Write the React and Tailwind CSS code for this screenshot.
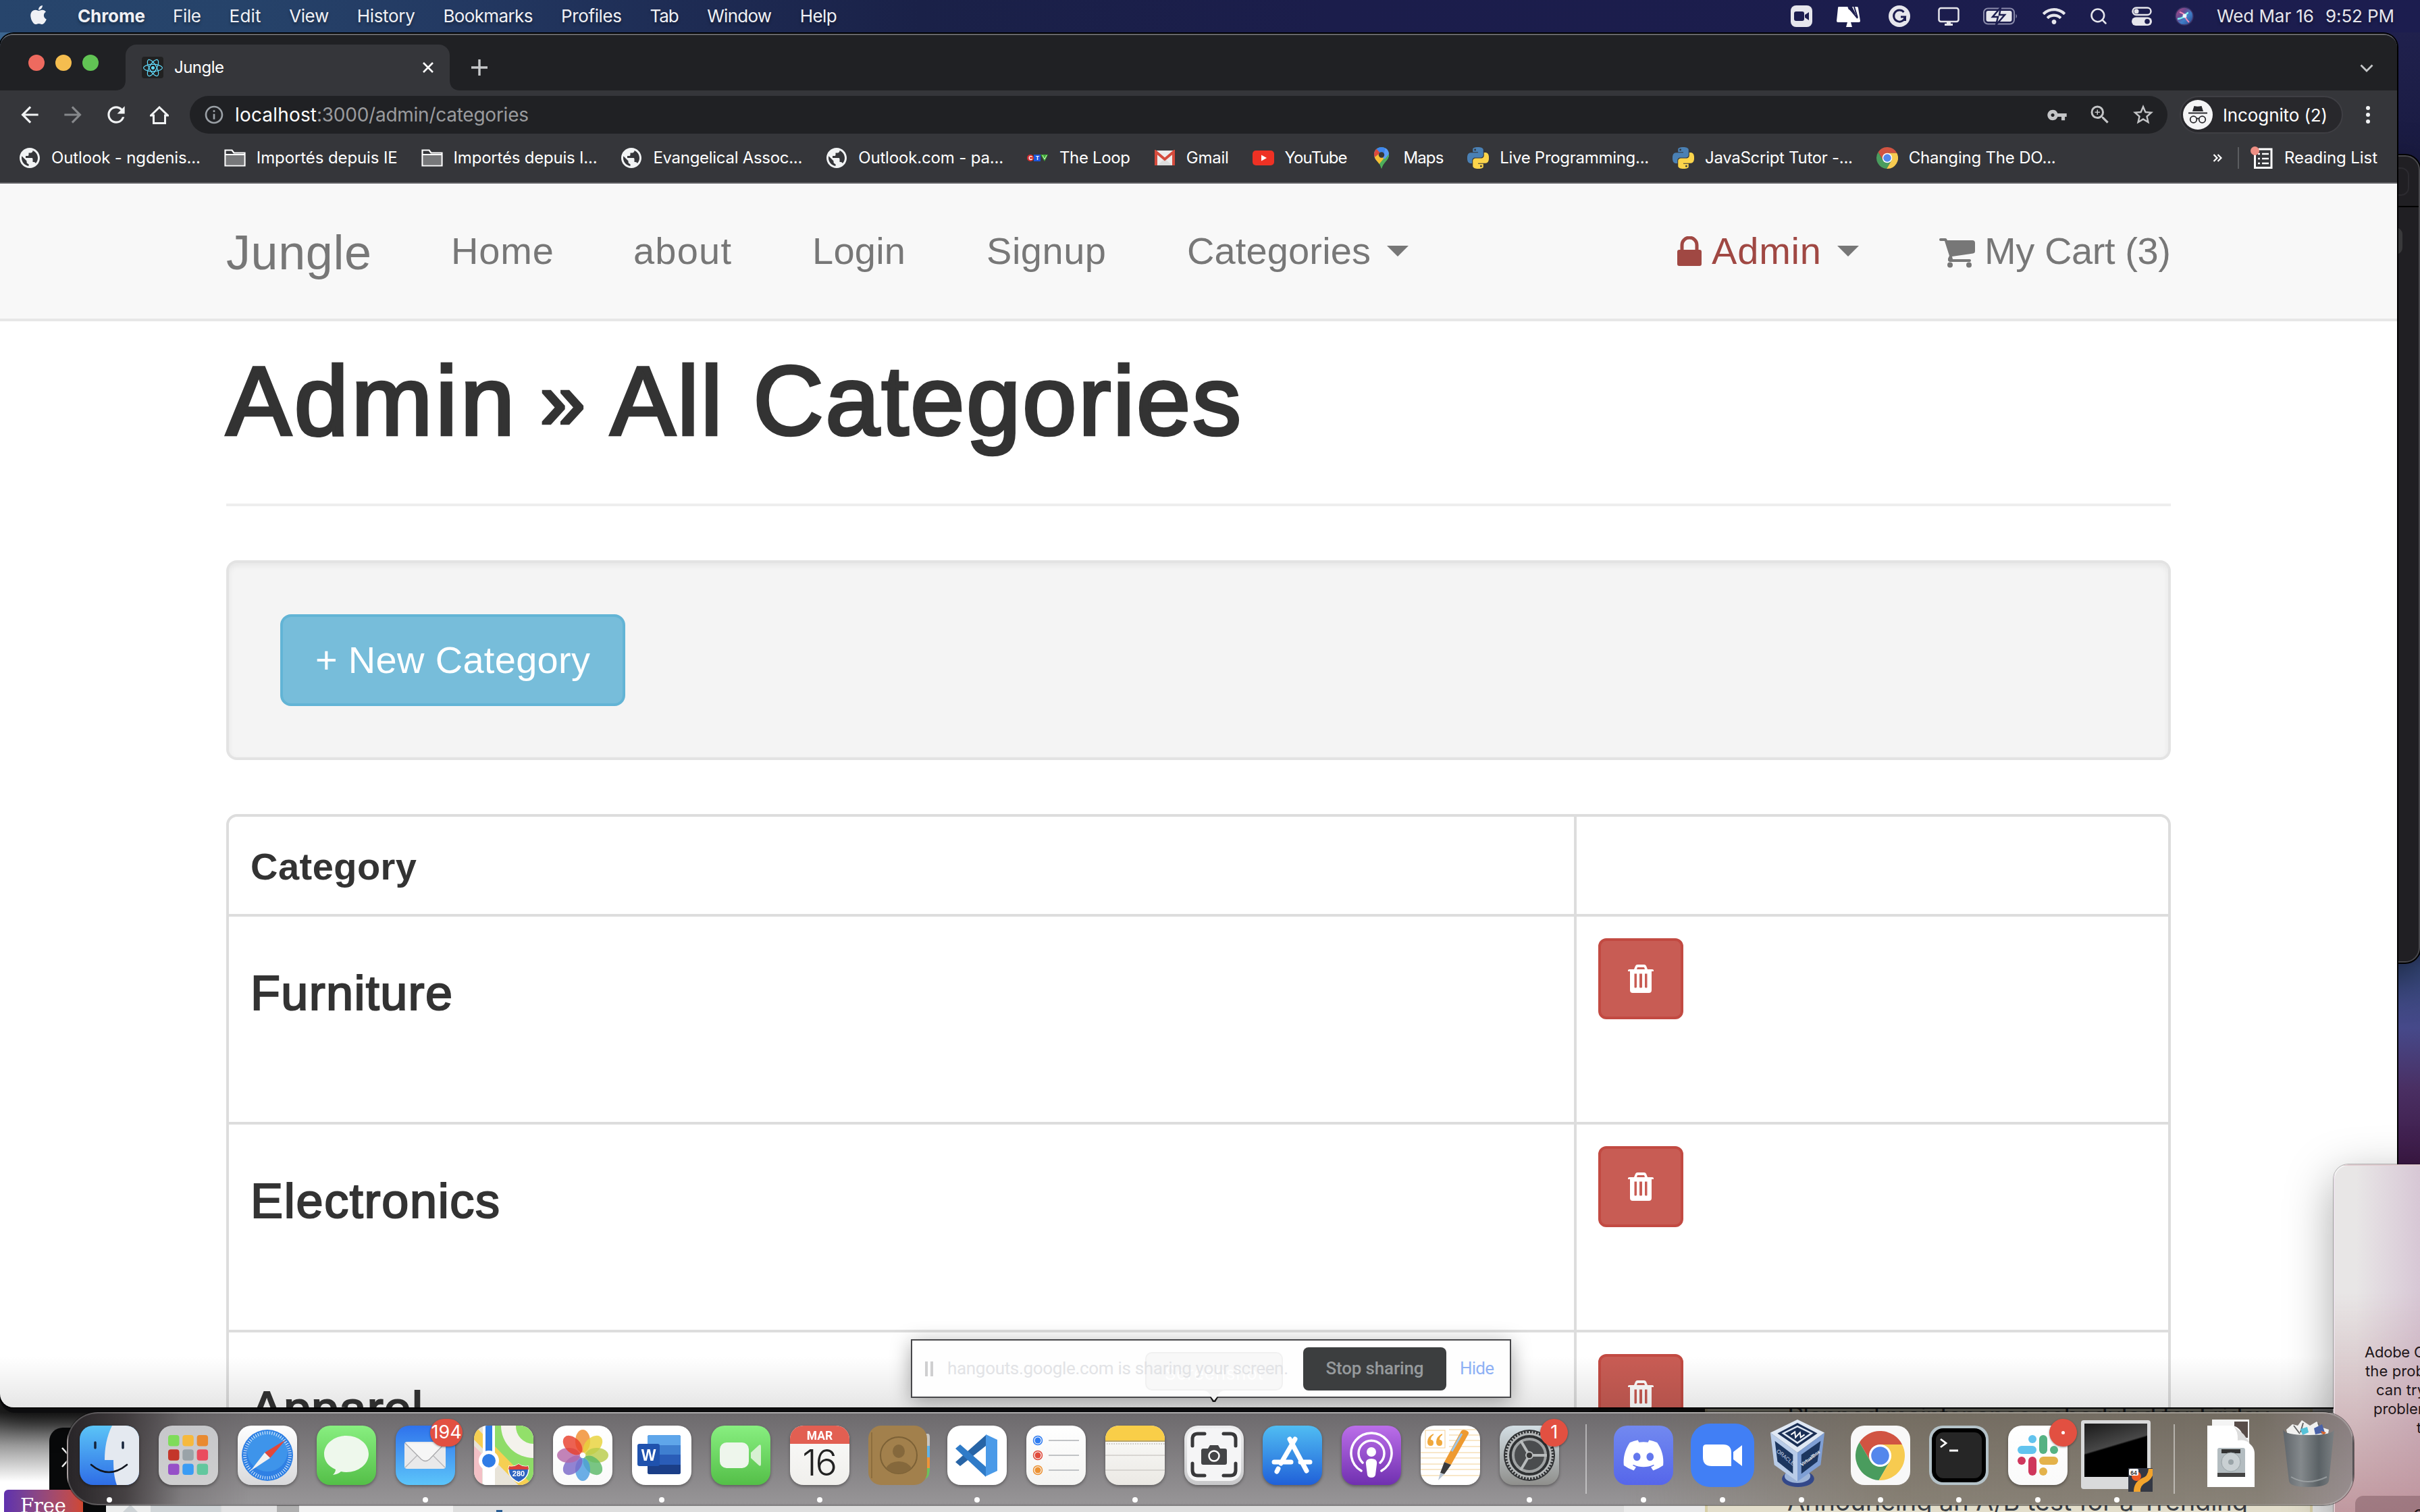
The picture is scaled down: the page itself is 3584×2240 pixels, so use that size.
import React, { useLayoutEffect, useRef, useState } from "react";
import { FaApple, FaReact, FaWifi, FaDiscord } from "react-icons/fa";
import { MdPublic, MdVpnKey, MdZoomIn, MdStarBorder, MdInfoOutline, MdArrowBack, MdArrowForward, MdRefresh } from "react-icons/md";
import { FiSearch } from "react-icons/fi";

/* Text set to a known width: tracking is adjusted after measuring. */
function T({ w, className = "", children }) {
  const ref = useRef(null);
  const [ls, setLs] = useState(0);
  useLayoutEffect(() => {
    const n = ref.current.textContent.length;
    setLs((w - ref.current.getBoundingClientRect().width) / Math.max(1, n - 1));
  }, [w]);
  return (
    <span className={`inline-block shrink-0 whitespace-nowrap ${className}`} style={{ width: w }}>
      <span ref={ref} style={{ letterSpacing: ls }}>{children}</span>
    </span>
  );
}

const menus = [["File", 42], ["Edit", 47], ["View", 59], ["History", 86], ["Bookmarks", 133], ["Profiles", 90], ["Tab", 43], ["Window", 96], ["Help", 55]];

function MenuBar() {
  return (
    <div className="flex h-[48px] w-full items-center bg-[linear-gradient(90deg,#27456c_0%,#26436a_10%,#233962_19%,#1e2c54_28%,#1a2148_38%,#1b1d4b_55%,#1c1d4f_100%)] text-[26px] leading-[48px] text-[#f0f1f5] [text-shadow:0_3px_4px_rgba(0,0,0,0.35)]">
      <FaApple className="ml-[41px] size-[32px] -translate-y-[2px]" />
      <T w={100} className="ml-[42px] font-bold">Chrome</T>
      <div className="ml-[41px] flex gap-[41.600px]">
        {menus.map(([m, w]) => <T key={m} w={w}>{m}</T>)}
      </div>
      <div className="ml-auto flex items-center text-[#e6e6ec]">
        <svg width="32" height="32" viewBox="0 0 32 32"><rect width="32" height="32" rx="8" fill="#e6e6ec" /><rect x="5" y="9" width="15" height="14" rx="3" fill="#1c1d4f" /><path d="M21 14l6-4v12l-6-4z" fill="#1c1d4f" /></svg>
        <svg className="ml-[35px]" width="38" height="34" viewBox="0 0 38 34"><path d="M4 3h16l-2 3 12 9L24 3h7q2 0 2 2l3 19q0 2-2 2H3q-2 0-2-2L3 5q0-2 1-2z" fill="#fff" /><path d="M18 3l14 17M27 3l5 16" stroke="#1c1d4f" strokeWidth="2" /><path d="M17 26h5l2 7h-9z" fill="#fff" /></svg>
        <svg className="ml-[40px]" width="32" height="32" viewBox="0 0 32 32"><circle cx="16" cy="16" r="16" fill="#e6e6ec" /><path d="M22.500 10A8.500 8.500 0 1 0 24.500 17H18M24.500 17v6" fill="none" stroke="#1c1d4f" strokeWidth="3" /></svg>
        <svg className="ml-[41px]" width="32" height="28" viewBox="0 0 32 28"><rect x="1.500" y="2" width="29" height="20" rx="3" fill="none" stroke="#e6e6ec" strokeWidth="2.500" /><path d="M13 22h6v3h3v3H10v-3h3z" fill="#e6e6ec" /></svg>
        <svg className="ml-[35px]" width="52" height="26" viewBox="0 0 52 26"><rect x="1" y="1.500" width="45" height="23" rx="6" fill="none" stroke="#8b8cab" strokeWidth="2" /><rect x="4.500" y="5" width="38" height="16" rx="3" fill="#e6e6ec" /><path d="M48.500 9.500q3 3.500 0 7z" fill="#8b8cab" /><path d="M26 0L14 14h8l-3 12 13-15h-8z" fill="#e6e6ec" stroke="#1c1d4f" strokeWidth="2.500" /></svg>
        <FaWifi className="ml-[36px] size-[34px]" />
        <FiSearch className="ml-[35px] size-[28px]" strokeWidth="2.2" />
        <svg className="ml-[35px]" width="30" height="28" viewBox="0 0 30 28"><rect x="1.500" y="1.500" width="27" height="10.500" rx="5.200" fill="none" stroke="#e6e6ec" strokeWidth="2.500" /><circle cx="7" cy="6.800" r="3.500" fill="#e6e6ec" /><rect y="15.500" width="30" height="12.500" rx="6.200" fill="#e6e6ec" /><circle cx="23" cy="21.800" r="3.800" fill="#1c1d4f" /></svg>
        <svg className="ml-[34px]" width="28" height="28" viewBox="0 0 28 28"><defs><linearGradient id="siri" x1="0" y1="0" x2="1" y2="1"><stop offset="0" stopColor="#c04a86" /><stop offset=".35" stopColor="#6a4a90" /><stop offset=".6" stopColor="#3f7fc8" /><stop offset="1" stopColor="#2a3a80" /></linearGradient></defs><circle cx="14" cy="14" r="13" fill="url(#siri)" stroke="#3c3468" strokeWidth="1.500" /><path d="M7 8q7 2 8 6t6 9" stroke="#f58ab4" strokeWidth="2" fill="none" /><path d="M4 18q8-1 11-5t5-4" stroke="#7ef0f0" strokeWidth="2.500" fill="none" /><circle cx="14.500" cy="13.500" r="3" fill="#fff" opacity=".85" /></svg>
        <T w={144} className="ml-[34px]">Wed Mar 16</T>
        <T w={102} className="mr-[38px] ml-[17px]">9:52 PM</T>
      </div>
    </div>
  );
}

const Globe = () => <MdPublic className="size-[36px] -mx-[2px] shrink-0 text-[#f1f3f4]" />;
const Folder = () => (
  <svg width="32" height="26" viewBox="0 0 32 26"><path d="M1.500 24.500V1.500h10l3 4h16v19z" fill="none" stroke="#fff" strokeWidth="2.200" /><rect x="3" y="8.500" width="26" height="14.500" fill="#77787a" /><path d="M2 8h28" stroke="#fff" strokeWidth="2" /></svg>
);
const PY = "M14.25.18l.9.2.73.26.59.3.45.32.34.34.25.34.16.33.1.3.04.26.02.2-.01.13V8.5l-.05.63-.13.55-.21.46-.26.38-.3.31-.33.25-.35.19-.35.14-.33.1-.3.07-.26.04-.21.02H8.77l-.69.05-.59.14-.5.22-.41.27-.33.32-.27.35-.2.36-.15.37-.1.35-.07.32-.04.27-.02.21v3.06H3.17l-.21-.03-.28-.07-.32-.12-.35-.18-.36-.26-.36-.36-.35-.46-.32-.59-.28-.73-.21-.88-.14-1.05-.05-1.23.06-1.22.16-1.04.24-.87.32-.71.36-.57.4-.44.42-.33.42-.24.4-.16.36-.1.32-.05.24-.01h.16l.06.01h8.16v-.83H6.18l-.01-2.75-.02-.37.05-.34.11-.31.17-.28.25-.26.31-.23.38-.2.44-.18.51-.15.58-.12.64-.1.71-.06.77-.04.84-.02 1.27.05zm-6.3 1.98l-.23.33-.08.41.08.41.23.34.33.22.41.09.41-.09.33-.22.23-.34.08-.41-.08-.41-.23-.33-.33-.22-.41-.09-.41.09z";
const Python = () => (
  <svg width="32" height="32" viewBox="0 0 24 24"><path d={PY} fill="#4a80b4" /><path d={PY} transform="rotate(180 12 12)" fill="#fbd44b" /></svg>
);
const Ctv = () => (
  <span className="flex w-[32px] justify-center text-[8px] leading-[10px] font-bold text-white">
    <span className="size-[10px] rounded-full bg-[#d8322c] text-center">C</span>
    <span className="size-[10px] bg-[#1d55d8] text-center">T</span>
    <svg width="11" height="10" viewBox="0 0 11 10"><path d="M0 0h11L6 10z" fill="#3fae35" /><path d="M3 1l3 6 3-6" stroke="#d8f5d0" fill="none" /></svg>
  </span>
);
const Gmail = () => (
  <svg width="32" height="24" viewBox="0 0 32 24"><rect x="1" y="1" width="30" height="22" rx="2" fill="#ececec" /><path d="M5 23L16 13l11 10z" fill="#dcdcdc" /><path d="M3 23V3l13 11L29 3v20" fill="none" stroke="#d54b3d" strokeWidth="4" /></svg>
);
const YouTube = () => (
  <svg width="32" height="24" viewBox="0 0 32 24"><rect y="1" width="32" height="22" rx="5" fill="#ee3124" /><path d="M13 7.500l8 4.500-8 4.500z" fill="#fff" /></svg>
);
const MapsPin = () => (
  <svg width="32" height="32" viewBox="0 0 32 32"><defs><clipPath id="pin"><path d="M16 0C9 0 5 5 5 11c0 4 2 7 5 10.500S15 28 16 32c1-4 3-7 6-10.500S27 15 27 11C27 5 23 0 16 0z" /></clipPath></defs><g clipPath="url(#pin)"><rect width="32" height="32" fill="#4fae5a" /><path d="M0 0h32v6L16 11 6 24 0 20z" fill="#3f86ee" /><path d="M0 3h9l7 8L6 24 0 20z" fill="#dc4a3c" /><path d="M3 17l13-10 5 8-11 13z" fill="#f6bf35" /><path d="M22 0l10 10-8 9-6-3z" fill="#5a9af5" /><path d="M27 10L10 32h22z" fill="#4fae5a" /></g><circle cx="16" cy="11.500" r="4.200" fill="#35363a" /></svg>
);
const ChromeMark = ({ className }) => (
  <svg className={className} viewBox="2 2 44 44"><path d="M43.600 14H24L15.340 29 5.540 12.030A22 22 0 0 1 43.600 14z" fill="#d15442" /><path d="M5.540 12.030L15.340 29h17.320L22.860 45.970A22 22 0 0 1 5.540 12.030z" fill="#4a9c5e" /><path d="M43.600 14H24l8.660 15-9.800 16.970A22 22 0 0 0 43.600 14z" fill="#f7cb50" /><circle cx="24" cy="24" r="10" fill="#fff" /><circle cx="24" cy="24" r="8" fill="#5487ec" /></svg>
);

const bookmarks = [
  [Globe, "Outlook - ngdenis...", 221], [Folder, "Importés depuis IE", 209], [Folder, "Importés depuis I...", 213],
  [Globe, "Evangelical Assoc...", 221], [Globe, "Outlook.com - pa...", 215], [Ctv, "The Loop", 105], [Gmail, "Gmail", 63],
  [YouTube, "YouTube", 93], [MapsPin, "Maps", 60], [Python, "Live Programming...", 221], [Python, "JavaScript Tutor -...", 219],
  [() => <ChromeMark className="size-[32px]" />, "Changing The DO...", 218],
];

function BrowserChrome() {
  return (
    <div className="w-full bg-[#35363a] text-[24px] text-white">
      <div className="flex h-[82px] items-end bg-[#202124]">
        <div className="flex h-full items-center gap-[16px] self-start pl-[42px]">
          <span className="size-[24px] rounded-full bg-[#ee6a5f]" />
          <span className="size-[24px] rounded-full bg-[#f5bd4f]" />
          <span className="size-[24px] rounded-full bg-[#61c454]" />
        </div>
        <svg className="ml-[24px]" width="16" height="16"><path d="M0 16Q16 16 16 0V16z" fill="#35363a" /></svg>
        <div className="flex h-[68px] w-[480px] items-center rounded-t-[16px] bg-[#35363a] pl-[24px]">
          <span className="flex size-[32px] items-center justify-center rounded-[4px] bg-[#212121]"><FaReact className="size-[29px] text-[#61dafb]" /></span>
          <T w={74} className="ml-[16px]">Jungle</T>
          <svg className="mr-[23px] ml-auto" width="18" height="18" viewBox="0 0 18 18"><path d="M2 2l14 14M16 2L2 16" stroke="#fff" strokeWidth="2.600" /></svg>
        </div>
        <svg width="16" height="16"><path d="M16 16Q0 16 0 0V16z" fill="#35363a" /></svg>
        <svg className="mb-[22px] ml-[16px]" width="24" height="24"><path d="M12 0v24M0 12h24" stroke="#c6c8ca" strokeWidth="3.400" /></svg>
        <svg className="mr-[35px] mb-[26px] ml-auto" width="20" height="13"><path d="M1.500 1.500L10 10l8.500-8.500" fill="none" stroke="#c6c8ca" strokeWidth="2.800" /></svg>
      </div>
      <div className="flex h-[72px] items-center">
        <MdArrowBack className="ml-[25px] size-[38px] text-[#f1f3f4]" />
        <MdArrowForward className="ml-[26px] size-[38px] text-[#86888b]" />
        <MdRefresh className="ml-[26px] size-[38px] text-[#f1f3f4]" />
        <svg className="ml-[31px]" width="28" height="27" viewBox="0 0 28 27"><path d="M1.500 14L14 2l12.500 12H22.500v11.500h-17V14z" fill="none" stroke="#f1f3f4" strokeWidth="3" strokeLinejoin="miter" /></svg>
        <div className="ml-[31px] flex h-[56px] w-[2929px] items-center rounded-full bg-[#202124] text-[28px]">
          <MdInfoOutline className="ml-[20px] size-[32px] text-[#9aa0a6]" />
          <T w={121} className="ml-[15px]">localhost</T>
          <T w={314} className="text-[#9a9b9e]">:3000/admin/categories</T>
          <MdVpnKey className="ml-auto size-[31px] text-[#c4c5c7]" />
          <MdZoomIn className="ml-[30px] size-[36px] text-[#c4c5c7]" />
          <MdStarBorder className="mr-[18px] ml-[28px] size-[36px] text-[#c4c5c7]" />
        </div>
        <div className="ml-[18px] flex h-[56px] w-[242px] items-center rounded-full border-2 border-[#3f3f44] bg-[#28282c] pl-[3px]">
          <svg width="44" height="44" viewBox="0 0 44 44"><circle cx="22" cy="22" r="22" fill="#f5f5f6" /><path d="M14 17l2.500-8q5 1.500 11 0l2.500 8zM8 18.500h28v2H8z" fill="#28282c" /><g fill="none" stroke="#28282c" strokeWidth="1.800"><circle cx="15.500" cy="29" r="4.800" /><circle cx="28.500" cy="29" r="4.800" /><path d="M20 28q2-1 4 0" /></g></svg>
          <T w={155} className="ml-[15px] text-[26px]">Incognito (2)</T>
        </div>
        <div className="ml-[34px] flex flex-col gap-[4px]">
          <span className="size-[6px] rounded-full bg-[#f1f3f4]" /><span className="size-[6px] rounded-full bg-[#f1f3f4]" /><span className="size-[6px] rounded-full bg-[#f1f3f4]" />
        </div>
      </div>
      <div className="flex h-[66px] items-center gap-[34.800px] border-b-2 border-[#5f5f63] pb-[8px] pl-[28px]">
        {bookmarks.map(([I, label, w], i) => (
          <div key={i} className="flex items-center"><span className="flex w-[32px] items-center justify-center"><I /></span><T w={w} className="ml-[16px]">{label}</T></div>
        ))}
        <div className="mr-[29px] ml-auto flex items-center">
          <svg width="14" height="12"><path d="M1.500 1l5 5-5 5M7.500 1l5 5-5 5" fill="none" stroke="#fff" strokeWidth="2.200" /></svg>
          <span className="ml-[23px] h-[32px] w-[2px] bg-[#5b5d60]" />
          <svg className="ml-[17px]" width="34" height="34" viewBox="0 0 34 34"><path d="M6.500 7v24.500h24.500V4H12" fill="none" stroke="#fff" strokeWidth="3" /><path d="M11 11h3M17 11h10M11 18h3M17 18h10M11 25h3M17 25h10" stroke="#fff" strokeWidth="2.500" /><circle cx="6.500" cy="6.500" r="6.500" fill="#ee8f84" /></svg>
          <T w={138} className="ml-[16px]">Reading List</T>
        </div>
      </div>
    </div>
  );
}

const Caret = () => <svg className="ml-[24px]" width="32" height="16"><path d="M0 0h32L16 16z" fill="#777" /></svg>;
const Trash = () => (
  <svg width="38" height="42" viewBox="0 0 38 42"><path fillRule="evenodd" fill="#fff" d="M9 7l2-5q1-2 3-2h10q2 0 3 2l2 5h7q2 0 2 1.500V10h-3v28q0 4-4 4H7q-4 0-4-4V10H0V8.500Q0 7 2 7zm4 0h12l-1-3H14zM9.500 13.500v20q0 1 1.500 1t2-1v-20zM17 13.500v20q0 1 2 1t2-1v-20zM25 13.500v20q.5 1 2 1t1.500-1v-20z" /></svg>
);

function Row({ name, w }) {
  return (
    <tr className="h-[308px] align-top">
      <td className="h-[308px] w-[1992px] border-t-4 border-r-4 border-[#ddd] px-[32px] pt-[74px]">
        <T w={w} className="text-[72px] leading-[79px] text-[#333] [-webkit-text-stroke:2.200px_#333]">{name}</T>
      </td>
      <td className="border-t-4 border-[#ddd] px-[32px] pt-[32px]">
        <button className="flex h-[120px] w-[126px] items-center justify-center rounded-[12px] border-4 border-[#c24a42] bg-[#c85c54]"><Trash /></button>
      </td>
    </tr>
  );
}

function Page() {
  return (
    <div className="w-full bg-white font-['Liberation_Sans',sans-serif] text-[56px] text-[#333]">
      <nav className="h-[204px] border-b-4 border-[#e7e7e7] bg-[#f8f8f8]">
        <div className="mx-auto flex h-[200px] w-[2880px] items-center text-[#777]">
          <T w={215} className="pt-[4px] text-[72px] leading-[80px]">Jungle</T>
          <T w={152} className="ml-[118px]">Home</T>
          <T w={145} className="ml-[118px]">about</T>
          <T w={138} className="ml-[120px]">Login</T>
          <T w={177} className="ml-[120px]">Signup</T>
          <T w={272} className="ml-[120px]">Categories</T>
          <Caret />
          <svg className="ml-auto" width="36" height="44" viewBox="0 0 36 44"><path d="M7 22v-9a11 11 0 0 1 22 0v9" fill="none" stroke="#a04843" strokeWidth="5" /><rect y="20" width="36" height="24" rx="3" fill="#a04843" /></svg>
          <T w={162} className="ml-[15px] text-[#a04843]">Admin</T>
          <Caret />
          <svg className="ml-[119px] translate-y-[2px]" width="54" height="46" viewBox="0 0 54 46"><path d="M2 2h7q2 0 2.500 2l.5 1h37q4 0 4 4v12q0 3-3 3.500L19 29l1 4h25q2 0 2 2t-2 2H16q-2 0-3-2v-3l2-4L8 6H2Q0 6 0 4t2-2z" fill="#777" /><circle cx="16" cy="41.500" r="4" fill="#777" /><circle cx="44" cy="41.500" r="4" fill="#777" /></svg>
          <T w={276} className="ml-[13px]">My Cart (3)</T>
        </div>
      </nav>
      <main className="mx-auto w-[2880px]">
        <h1 className="flex h-[274px] border-b-4 border-[#eee] pt-[40px] text-[144px] leading-[158px] [-webkit-text-stroke:4.500px_#333]">
          <T w={427}>Admin</T>
          <T w={66} className="ml-[38px] -translate-y-[2px] text-[120px]">»</T>
          <T w={934} className="ml-[38px]">All Categories</T>
        </h1>
        <section className="mt-[80px] h-[296px] rounded-[16px] border-4 border-[#e3e3e3] bg-[#f4f4f4] p-[76px] shadow-[inset_0_4px_8px_rgba(0,0,0,0.06)]">
          <button className="flex h-[136px] w-[511px] items-center rounded-[16px] border-4 border-[#62b4d5] bg-[#77bdda] pl-[48px] text-white">
            <T w={407}>+ New Category</T>
          </button>
        </section>
        <section className="mt-[80px] h-[1000px] overflow-hidden rounded-t-[16px] border-4 border-[#ddd]">
          <table className="w-full table-fixed border-separate border-spacing-0">
            <thead>
              <tr className="h-[144px]">
                <th className="w-[1996px] border-r-4 border-[#ddd] px-[32px] pt-[3px] text-left"><T w={246} className="leading-[80px] font-bold">Category</T></th>
                <th />
              </tr>
            </thead>
            <tbody>
              <Row name="Furniture" w={299} />
              <Row name="Electronics" w={369} />
              <Row name="Apparel" w={255} />
            </tbody>
          </table>
        </section>
      </main>
    </div>
  );
}

/* Rounded application tile with a vertical gradient. */
function Tile({ id, a, b, children }) {
  return (
    <svg className="size-[88px] overflow-visible drop-shadow-[0_2px_2px_rgba(0,0,0,0.35)]" viewBox="0 0 88 88">
      <defs><linearGradient id={id} x1="0" y1="0" x2="0" y2="1"><stop offset="0" stopColor={a} /><stop offset="1" stopColor={b} /></linearGradient><clipPath id={id + "c"}><rect width="88" height="88" rx="20" /></clipPath></defs>
      <g clipPath={`url(#${id}c)`}><rect width="88" height="88" fill={`url(#${id})`} />{children}</g>
    </svg>
  );
}

const launch = ["#7fdc5a", "#f6b93c", "#e98a30", "#c4362a", "#9aa3a8", "#ea4c5e", "#9650c8", "#3a9cf4", "#62c79e"];
const petals = ["#f08c2e", "#e8d23a", "#b8cc4a", "#5cb868", "#4a9ce0", "#7a68c8", "#b468a8", "#e8402c"];
const ticks = Array.from({ length: 60 }, (_, i) => i * 6);
const teeth = Array.from({ length: 48 }, (_, i) => i * 7.5);
const ser = "Liberation Sans, sans-serif";

const apps = [
  ["Finder", <Tile id="fi" a="#5bc4f7" b="#2e6de6"><path d="M48 0C40 16 37 33 37 51h13c0 14 1 26 5 37h33V0z" fill="#e4e9f0" /><path d="M23 25v8M64 25v8" stroke="#15233a" strokeWidth="3.500" strokeLinecap="round" /><path d="M17 58q26 22 53 0" fill="none" stroke="#10151f" strokeWidth="2.600" strokeLinecap="round" /></Tile>, 1],
  ["Launchpad", <Tile id="la" a="#c6c7ca" b="#cfcfd0">{launch.map((c, i) => <rect key={i} x={14 + (i % 3) * 21.3} y={14 + Math.floor(i / 3) * 21.3} width="16.500" height="16.500" rx="4" fill={c} />)}</Tile>],
  ["Safari", <Tile id="sa" a="#ffffff" b="#d9d9db"><circle cx="44" cy="44" r="38" fill="#2f80e4" /><circle cx="44" cy="38" r="30" fill="#4aa2ee" opacity=".6" />{ticks.map((t) => <path key={t} d="M44 8v5" stroke="#e6f0fb" strokeWidth="1" transform={`rotate(${t} 44 44)`} />)}<path d="M71 21L40 40l8 8z" fill="#e2473a" /><path d="M19 67L40 40l8 8z" fill="#f2f2f2" /></Tile>],
  ["Messages", <Tile id="me" a="#88ef80" b="#54bf48"><path d="M44 15c18 0 33 12 33 27S62 69 44 69q-4 0-8-1-4 4-12 5 4-4 4-8C17 60 11 52 11 42c0-15 15-27 33-27z" fill="#eef8ec" /></Tile>],
  ["Mail", <Tile id="ma" a="#2f72ec" b="#5cc5fa"><rect x="13" y="24" width="61" height="40" rx="4" fill="#e9e9ea" /><path d="M14 62l22-22M73 62L51 40" stroke="#b5b5b8" strokeWidth="1.300" /><path d="M14 26l24 24q6 5 12 0l23-24" fill="#f6f6f6" stroke="#a8a8ab" strokeWidth="1.300" /></Tile>, 1, "194"],
  ["Maps", <Tile id="mp" a="#e8e2d4" b="#e8e4da"><path d="M30 0h58v88L30 40z" fill="#8fdc68" /><path d="M40 0a48 48 0 0 0 48 48V0z" fill="#f4f2ec" /><path d="M62 0a26 26 0 0 0 26 27V0z" fill="#92e06a" /><path d="M0 10L88 100" stroke="#f6cf52" strokeWidth="15" /><path d="M0 30l12 12v46H0z" fill="#f3c0c6" /><path d="M22 0v88" stroke="#fff" strokeWidth="18" /><path d="M22 0v50" stroke="#2f7ce6" strokeWidth="10" /><circle cx="22" cy="52" r="15" fill="#fff" /><circle cx="22" cy="52" r="10" fill="#2f7ce6" /><path d="M52 60q7 2 14-3 7 5 14 3 4 16-14 24-18-8-14-24z" fill="#2d63c0" stroke="#fff" strokeWidth="1.500" /><path d="M52 60q7 2 14-3 7 5 14 3l1 5H51z" fill="#d8403a" /><text x="66" y="75" textAnchor="middle" fontFamily={ser} fontSize="11" fontWeight="700" fill="#fff">280</text></Tile>],
  ["Photos", <Tile id="ph" a="#ffffff" b="#fafafa">{petals.map((c, i) => <ellipse key={c} cx="44" cy="23" rx="11" ry="17" fill={c} opacity=".82" transform={`rotate(${i * 45} 44 44)`} />)}</Tile>],
  ["Word", <Tile id="wo" a="#ffffff" b="#ffffff"><rect x="23" y="14" width="49" height="58" rx="3" fill="#2a5db8" /><path d="M23 29V17q0-3 3-3h43q3 0 3 3v12z" fill="#5fa6ea" /><path d="M23 29h49v14H23z" fill="#3f7fd0" /><path d="M23 58h49v11q0 3-3 3H26q-3 0-3-3z" fill="#1b3f88" /><rect x="8" y="27" width="33" height="33" rx="3" fill="#1f52ae" /><text x="24.500" y="52" textAnchor="middle" fontFamily={ser} fontSize="23" fontWeight="700" fill="#fff">W</text></Tile>, 1],
  ["FaceTime", <Tile id="fa" a="#88ef80" b="#54bf48"><rect x="13" y="25" width="43" height="38" rx="10" fill="#eef6ec" /><path d="M59 40l12-11q3-2 3 2v26q0 4-3 2L59 48z" fill="#d7f0d2" /></Tile>],
  ["Calendar", <Tile id="ca" a="#fbfbfa" b="#f0efec"><rect width="88" height="27" fill="#e25f52" /><text x="44" y="20.500" textAnchor="middle" fontFamily="Roboto, sans-serif" fontSize="17.500" fontWeight="700" fill="#fff">MAR</text><text x="43" y="74" textAnchor="middle" fontFamily="Inter, sans-serif" fontSize="54" fontWeight="300" letterSpacing="-2" fill="#222">16</text></Tile>, 1],
  ["Contacts", <svg className="size-[88px] overflow-visible" viewBox="0 0 88 88"><path d="M84 12h4q3 0 3 5v13h-7z" fill="#c8c6c2" /><path d="M84 30h7v17h-7z" fill="#5fb4ea" /><path d="M84 47h7v16h-7z" fill="#ee9438" /><path d="M84 63h7q0 14-7 16z" fill="#6ac45c" /><rect width="87" height="88" rx="19" fill="#a2804c" /><path d="M5 10v68" stroke="#86683a" strokeWidth="1.500" /><circle cx="45" cy="44" r="27" fill="none" stroke="#7c6136" strokeWidth="2" /><ellipse cx="45" cy="38" rx="9" ry="10" fill="#85683c" /><path d="M26 63q6-10 19-10t19 10Q56 71 45 71T26 63z" fill="#85683c" /></svg>],
  ["VS Code", <Tile id="vs" a="#ffffff" b="#ffffff"><path d="M12 54l7 6 38-30V14z" fill="#2764a6" /><path d="M12 34l7-6 38 33v15z" fill="#2f7bc8" /><path d="M57 13l17 8v46l-17 8z" fill="#4a9ae8" /></Tile>, 1],
  ["Reminders", <Tile id="re" a="#ffffff" b="#f4f4f2">{[["#2f7cf0", 22], ["#e04a3c", 44], ["#ec9234", 66]].map(([c, y]) => <g key={c}><circle cx="17" cy={y} r="6.500" fill="none" stroke={c} strokeWidth="1.500" /><circle cx="17" cy={y} r="4.500" fill={c} /><path d={`M33 ${y}h45`} stroke="#aeb0b4" strokeWidth="1.500" /></g>)}</Tile>],
  ["Notes", <Tile id="no" a="#fcfcfb" b="#ebe9e4"><rect width="88" height="22" fill="#f9ce48" /><path d="M0 23h88" stroke="#b9a568" strokeWidth="2" /><path d="M2 27h86" stroke="#b8b6b2" strokeWidth="1.500" strokeDasharray="1.500 2" /><path d="M0 44h88M0 66h88" stroke="#cfcdc9" strokeWidth="1.500" /></Tile>, 1],
  ["Screenshot", <Tile id="sc" a="#eeeeef" b="#c8c8ca"><rect x="4" y="4" width="80" height="78" rx="16" fill="#f5f5f6" /><path d="M12 30V20q0-8 8-8h10M58 12h10q8 0 8 8v10M76 56v10q0 8-8 8H58M30 74H20q-8 0-8-8V56" fill="none" stroke="#38383a" strokeWidth="5" strokeLinecap="round" /><path d="M28 34h7l3-5h12l3 5h7q3 0 3 3v18q0 3-3 3H28q-3 0-3-3V37q0-3 3-3z" fill="#444547" /><circle cx="44" cy="45" r="7.500" fill="none" stroke="#fff" strokeWidth="2.500" /></Tile>],
  ["App Store", <Tile id="as" a="#50bdf3" b="#2060d8"><path d="M40 20l25 47M48 20L27 56M23 64l-2 4M17 54h25M56 54h14" stroke="#fff" strokeWidth="7" strokeLinecap="round" /></Tile>],
  ["Podcasts", <Tile id="po" a="#bb6ee9" b="#7030b0"><path d="M29 67A30 30 0 1 1 59 67" fill="none" stroke="#fff" strokeWidth="3.500" strokeLinecap="round" /><path d="M31 55a19 19 0 1 1 26 0" fill="none" stroke="#fff" strokeWidth="3.500" strokeLinecap="round" /><circle cx="44" cy="39" r="7" fill="#fff" /><path d="M44 49q9 0 8 8l-2 16q-1 4-6 4t-6-4l-2-16q-1-8 8-8z" fill="#fff" /></Tile>],
  ["Pages", <Tile id="pa" a="#ffffff" b="#ffffff"><path d="M42 6h46M42 14h46M42 22h46M42 31h46M0 40h88M0 48h88M0 57h88M0 65h88M0 74h88" stroke="#f6dfb8" strokeWidth="1.300" /><rect x="7" y="7" width="29" height="26" fill="#fff" stroke="#f4cf94" strokeWidth="1" /><path d="M19 12q-9 4-9 12 0 6 5 6 4 0 4-4.500T15 21q0-5 4-7zM32 12q-9 4-9 12 0 6 5 6 4 0 4-4.500T28 21q0-5 4-7z" fill="#f0a83c" /><path d="M60 8q2-3 7-1 5 2 4 5L45 58l-10-4z" fill="#ee9a30" /><path d="M61 12L46 38" stroke="#9fc6e8" strokeWidth="3" /><path d="M35 54l10 4-10 14-6-2z" fill="#3a3a3c" /><path d="M29 70l6 2-9 9z" fill="#b8c4d0" /></Tile>],
  ["System Preferences", <Tile id="se" a="#d3dee4" b="#8f8f8c"><circle cx="44" cy="44" r="38" fill="#2f3133" />{teeth.map((t) => <path key={t} d="M44 8v5" stroke="#b4b7b8" strokeWidth="2" transform={`rotate(${t} 44 44)`} />)}<circle cx="44" cy="44" r="31.500" fill="none" stroke="#b4b7b8" strokeWidth="3" /><circle cx="44" cy="44" r="24" fill="#4a4c4e" stroke="#a0a3a4" strokeWidth="4" /><path d="M44 44h26M44 44L31 22M44 44L31 66" stroke="#b8bbbc" strokeWidth="4" /><circle cx="44" cy="44" r="5" fill="#333" stroke="#b8bbbc" strokeWidth="2" /></Tile>, 1, "1"],
];

const running = [
  ["Discord", <span className="flex size-[88px] items-center justify-center rounded-[20px] bg-linear-to-b from-[#7289f0] to-[#5666ea]"><FaDiscord className="size-[64px] text-white" /></span>, 1],
  ["Zoom", <svg className="size-[94px]" viewBox="0 0 94 94"><rect width="94" height="94" rx="28" fill="#417ff5" /><path d="M18 36q0-5 5-5h25q12 0 12 12v20H31q-13 0-13-13zM63 42l13-10v31L63 53z" fill="#fff" /></svg>, 1],
  ["VirtualBox", <svg className="h-[100px] w-[84px] -translate-x-[6px] -translate-y-[3px] overflow-visible" viewBox="0 0 88 98" preserveAspectRatio="none"><ellipse cx="45" cy="86" rx="25" ry="12" fill="#33488a" /><ellipse cx="44" cy="82" rx="20" ry="10" fill="#9db4d8" /><path d="M44 0l42 19-42 29L2 19z" fill="#dfe8f4" /><path d="M44 5l31 15-31 20-31-20z" fill="#1a2f55" /><path d="M44 10l22 10-22 14-22-14z" fill="#1a2f55" stroke="#dfe8f4" strokeWidth="2.500" /><path d="M34 22l6-4 1 8 7-7 1 7 6-4" stroke="#fff" strokeWidth="2" fill="none" /><path d="M2 19l42 29v42L8 66z" fill="#b9cce8" /><path d="M9 31l28 20v28L13 61z" fill="#1c365f" /><path d="M86 19L44 48v42l36-24z" fill="#7f9fd4" /><path d="M80 31L50 51v28l25-18z" fill="#1c365f" /><text x="11" y="47" transform="rotate(38 11 47)" fontFamily={ser} fontSize="8" fill="#cfdcf0">ORACLE</text><text x="51" y="68" transform="rotate(-35 51 68)" fontFamily={ser} fontSize="7" fontWeight="700" fill="#fff">VirtualBox</text></svg>, 1],
  ["Chrome", <span className="flex size-[88px] items-center justify-center rounded-[20px] bg-[#f8f8f8]"><ChromeMark className="size-[73px]" /></span>, 1],
  ["Terminal", <span className="flex size-[88px] items-center justify-center rounded-[20px] bg-[#b4c2c8]"><span className="flex size-[80px] rounded-[17px] border-[6px] border-black bg-[#262626]"><svg width="68" height="68"><path d="M7 10l8 6-8 6" fill="none" stroke="#fff" strokeWidth="2.800" /><path d="M20 27h13" stroke="#fff" strokeWidth="3" /></svg></span></span>, 1],
  ["Slack", <Tile id="sl" a="#ffffff" b="#fafafa"><g strokeWidth="12" strokeLinecap="round"><path d="M20 36h16" stroke="#62c3ee" /><path d="M36 20h.01" stroke="#62c3ee" /><path d="M52 20v16" stroke="#56b283" /><path d="M68 36h.01" stroke="#56b283" /><path d="M52 52h16" stroke="#e4b24a" /><path d="M52 68h.01" stroke="#e4b24a" /><path d="M36 52v16" stroke="#cf375c" /><path d="M20 52h.01" stroke="#cf375c" /></g></Tile>, 1, "•"],
  ["Preview window", <svg className="h-[106px] w-[106px] translate-y-px overflow-visible" viewBox="0 0 106 106"><defs><linearGradient id="tv" x1="0" y1="0" x2=".35" y2="1"><stop offset="0" stopColor="#1a1a1a" /><stop offset=".5" stopColor="#484848" /><stop offset=".53" stopColor="#000" /></linearGradient></defs><rect width="103" height="102" rx="4" fill="#d9dadb" /><rect x="5" y="5" width="93" height="79" fill="url(#tv)" /><rect x="70" y="71" width="36" height="35" fill="#343844" /><path d="M78 106q0-14 12-20 9-2 10-14h6v10q-4 8-11 11-8 4-7 13z" fill="#f3a42c" /><circle cx="82" cy="83" r="7" fill="#ee5a24" /><rect x="71" y="72" width="14" height="10" rx="2" fill="#fff" /><text x="78" y="80.500" textAnchor="middle" fontFamily={ser} fontSize="8.500" fontWeight="700" fill="#333">64</text></svg>, 1],
];

const tail = [
  ["Disk images", <svg className="h-[100px] w-[70px] -translate-y-[3px]" viewBox="0 0 70 100"><path d="M7 0h55v60H7z" fill="#f4f4f4" /><path d="M40 3h20v24H40z" fill="#584c48" /><path d="M0 9h38q12 3 16 18l12 12q4 5 4 12v49H0z" fill="#fff" /><path d="M38 9q8 8 7 22 10-2 18 4L54 22z" fill="#dcdcdc" /><rect x="15" y="42" width="41" height="43" rx="3" fill="#b3bcc0" /><rect x="21" y="44" width="28" height="6" fill="#333" /><circle cx="35" cy="63" r="14" fill="#c9d0d3" stroke="#98a2a6" /><circle cx="35" cy="63" r="4" fill="#9aa4a8" /><rect x="15" y="79" width="41" height="6" fill="#444" /></svg>],
  ["Trash", <svg className="h-[100px] w-[76px] -translate-x-[2px] -translate-y-[2px]" viewBox="0 0 76 100"><defs><linearGradient id="bin" x1="0" x2="1"><stop offset="0" stopColor="#5f656a" /><stop offset=".35" stopColor="#84898c" /><stop offset=".7" stopColor="#5a6165" /><stop offset="1" stopColor="#7b8083" /></linearGradient></defs><path d="M5 14L14 6l8 2 6-8 12 8 10-6 6 8 12 4-2 12H8z" fill="#f1f1f0" /><path d="M16 8l9 12M30 4l-4 14M52 4l6 16" stroke="#666" strokeWidth="2" /><path d="M46 12l12-6 4 12-14 3z" fill="#4a62a8" /><path d="M26 13l10-3 2 8-9 4z" fill="#56c2d8" /><path d="M56 16l8 2-4 5z" fill="#d8662e" /><path d="M0 13q1 9 38 9t38-9l-8 77q-2 9-30 9T9 90z" fill="url(#bin)" /><path d="M12 84q24 14 53 0" fill="none" stroke="#b0b5b8" strokeWidth="2" opacity=".6" /></svg>],
];

function DockCell({ item: [name, icon, dot, badge] }) {
  return (
    <div className="relative flex h-[138px] w-[116.800px] shrink-0 items-center justify-center pb-[14px]" title={name}>
      {icon}
      {badge && <span className={`absolute top-[8px] flex h-[41px] items-center justify-center rounded-full bg-[#e25041] text-[27px] text-white shadow-[0_1px_3px_rgba(0,0,0,0.4)] ${badge === "194" ? "left-[66px] w-[48px]" : "left-[75px] w-[41px]"}`}>{badge === "•" ? <span className="size-[5px] rounded-full bg-white" /> : badge}</span>}
      {dot && <span className="absolute bottom-[6px] size-[8px] rounded-full bg-white" />}
    </div>
  );
}
const Sep = () => <div className="flex h-[138px] w-[52.600px] shrink-0 justify-center pt-[16px]"><span className="h-[103px] w-[2px] bg-white/45" /></div>;

function Dock() {
  return (
    <div className="absolute top-[2092px] left-[99px] flex h-[138px] w-[3387px] overflow-visible rounded-[46px] border-2 border-white/20 bg-[linear-gradient(90deg,rgba(40,37,40,1)_0%,rgba(56,51,53,0.85)_2.500%,rgba(80,76,78,0.300)_5%,rgba(80,76,78,0)_8%),linear-gradient(90deg,rgba(122,111,88,0)_68%,rgba(122,111,88,0.550)_80%,rgba(122,111,88,0.500)_96%,rgba(155,140,140,0.600)_100%),linear-gradient(180deg,#6d6a6d,#979597)] pl-[3px] shadow-[0_0_0_1px_rgba(0,0,0,0.45)]">
      {apps.map((a) => <DockCell key={a[0]} item={a} />)}
      <Sep />
      {running.map((a) => <DockCell key={a[0]} item={a} />)}
      <Sep />
      {tail.map((a) => <DockCell key={a[0]} item={a} />)}
    </div>
  );
}

function ShareBar() {
  return (
    <div className="absolute top-[1984px] left-[1349px] flex h-[87px] w-[889px] items-center border-2 border-[#47474a] bg-[#fefefe] font-[Roboto,sans-serif] text-[26px] shadow-[0_6px_30px_rgba(0,0,0,0.35)]">
      <div className="absolute top-[17px] left-[345px] flex h-[57px] w-[204px] items-center justify-center rounded-[10px] border-2 border-[#f1f1f1] bg-[#f8f8f8] pt-[6px] font-[Inter,sans-serif] text-white">
        <T w={146}>Screenshot</T>
        <svg className="absolute top-[53px] left-[84px]" width="32" height="20"><path d="M10 12h12l-4 7h-4z" fill="#111" /><path d="M0 2q8 0 12 10l4 5 4-5Q24 2 32 2z" fill="#f4f4f4" /></svg>
      </div>
      <span className="relative ml-[19px] h-[22px] w-[12px] border-x-4 border-[#cfcfd0]" />
      <T w={505} className="relative ml-[21px] text-[#e2e3e6]">hangouts.google.com is sharing your screen.</T>
      <span className="ml-[22px] flex h-[64px] w-[212px] items-center justify-center rounded-[8px] bg-[#3c3e3f] font-medium text-[#969a9c]"><T w={145}>Stop sharing</T></span>
      <T w={51} className="ml-[20px] text-[#8fb1f5]">Hide</T>
    </div>
  );
}

function Backdrop() {
  return (
    <>
      <div className="absolute top-[48px] left-0 h-[40px] w-[700px] bg-[#3c6690]" />
      <div className="absolute top-[230px] left-[3400px] h-[1196px] w-[184px] rounded-[22px] border-2 border-[#48484c] bg-[#201f23] shadow-[0_0_0_2px_#000,0_20px_60px_rgba(0,0,0,0.5)]">
        <div className="h-[75px] border-b-2 border-black pt-[16px] pl-[100px]"><div className="h-[42px] w-[66px] rounded-[12px] border-2 border-[#2c2b30]" /></div>
        <div className="mt-[30px] ml-[100px] h-[40px] w-[56px] rounded-[10px] bg-[#39393b]" />
      </div>
      {/* Windows whose lower edges show around the dock */}
      <div className="absolute top-[2060px] left-0 flex h-[180px] w-[3584px] items-end bg-[linear-gradient(180deg,#222_18%,#9a9a9a_45%,#fff_75%)]">
        <div className="h-[125px] w-[84px] translate-x-[73px] rounded-tl-[20px] bg-[#08090a]"><svg className="mt-[28px] ml-[18px]" width="12" height="32"><path d="M1 2l8 9M1 30l8-9" stroke="#eee" strokeWidth="2.500" /></svg></div>
        <div className="ml-[73px] flex h-[14px] w-[2368px] bg-[#dedede]">
          <svg width="66" height="14"><rect width="66" height="14" fill="#eceded" /><path d="M36 3l11 11H25z" fill="#cdd2d5" /></svg>
          <span className="w-[104px] bg-[#d0d5d8]" /><span className="ml-[2px] w-[81px] bg-[#e3e3e4]" /><span className="w-[33px] bg-[#b0b0b0]" /><span className="w-[228px] bg-[#f3f3f3]" />
          <span className="mt-[11px] ml-[64px] h-[3px] w-[9px] bg-[#2b5f95]" />
          <span className="ml-auto w-[120px] bg-[#eaeaea]" />
        </div>
        <div className="flex h-[180px] w-[900px] flex-col overflow-hidden border-x-4 border-[#d8cfa6] bg-[#e3decb] pl-[118px] text-[38px] leading-[57px] text-[#3b4045]">
          <div className="h-[136px] shrink-0 pt-[10px]"><T w={714}>Planned maintenance scheduled for Friday</T></div>
          <T w={682}>Announcing an A/B test for a Trending</T>
        </div>
        <div className="h-[180px] flex-1 bg-[#e6e6e6]" />
      </div>
      <div className="absolute top-[2207px] left-[6px] h-[40px] w-[117px] rounded-[6px] bg-linear-to-r from-[#5f2fae] to-[#d0472f] pt-[6px] pl-[24px] font-['DejaVu_Serif',serif] text-[29px] leading-[36px] text-white"><T w={68}>Free</T></div>
      <div className="absolute top-[2084px] left-[2300px] h-[9px] w-[1155px] bg-black/65" />
      <div className="absolute top-[2000px] left-0 h-[93px] w-[2368px] rounded-b-[22px] bg-[#0c0c0e] shadow-[0_10px_40px_rgba(0,0,0,0.6)]" />
    </>
  );
}

export default function App() {
  return (
    <div className="relative h-[2240px] w-[3584px] overflow-hidden bg-[linear-gradient(180deg,#212250_0%,#1a1b42_10%,#1c1d48_60%,#35487a_64%,#46498a_68%,#4a2f63_72%,#3b1844_77%)] font-[Inter,sans-serif]">
      <Backdrop />
      <MenuBar />
      <div className="relative mt-[2px] h-[2035px] w-[3550px] overflow-hidden rounded-[20px] border-t-2 border-[#66676a] shadow-[0_0_0_2px_#000]">
        <BrowserChrome />
        <Page />
        <div className="absolute bottom-0 left-0 h-[75px] w-full bg-linear-to-b from-transparent to-black/10" />
      </div>
      <ShareBar />
      <div className="absolute top-[1725px] left-[3456px] h-[540px] w-[160px] rounded-tl-[22px] border-2 border-white/50 bg-[linear-gradient(180deg,rgba(190,140,148,0)_35%,rgba(186,140,148,0.85)_95%),linear-gradient(90deg,#e8e6e6_20%,#d6c5d4_85%)] text-[22px] leading-[28px] text-[#1d1518] shadow-[0_0_0_1px_rgba(0,0,0,0.25),0_20px_70px_rgba(0,0,0,0.35)]">
        <div className="mt-[262px] pl-[44px]"><T w={89}>Adobe C</T></div>
        <div className="pl-[45px]"><T w={88}>the prob</T></div>
        <div className="pl-[61px]"><T w={73}>can try</T></div>
        <div className="pl-[57px]"><T w={85}>problem</T></div>
        <div className="pl-[121px]">t</div>
        <div className="mt-[87px] ml-[30px] h-[90px] w-[140px] rounded-[12px] bg-[#7d5a62]/50 pt-[14px] pl-[86px]">C</div>
      </div>
      <Dock />
    </div>
  );
}
